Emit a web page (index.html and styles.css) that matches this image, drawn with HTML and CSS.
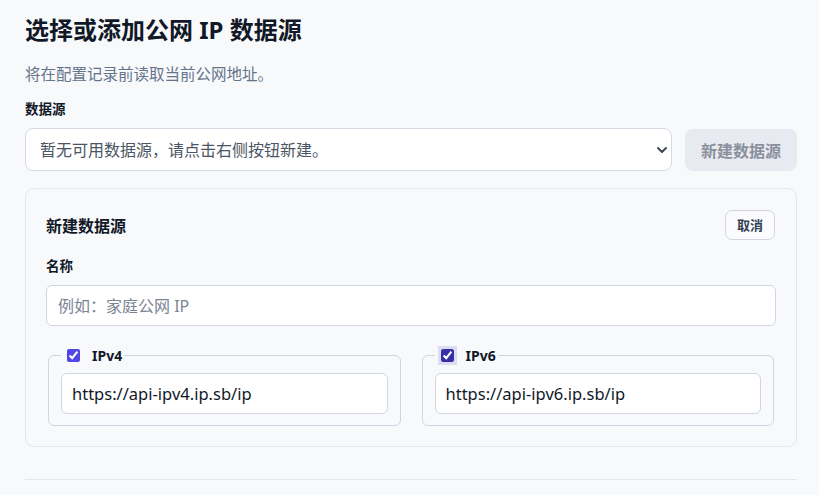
FILE: index.html
```html
<!DOCTYPE html>
<html lang="zh-CN">
<head>
  <meta charset="UTF-8">
  <title>选择或添加公网 IP 数据源</title>
  <link rel="stylesheet" href="styles.css">
</head>
<body>
  <main class="panel">
    <h1>选择或添加公网 IP 数据源</h1>
    <p class="hint">将在配置记录前读取当前公网地址。</p>

    <label class="field-label" for="source">数据源</label>
    <div class="source-row">
      <div class="select-wrap">
        <select id="source" class="select">
          <option>暂无可用数据源，请点击右侧按钮新建。</option>
        </select>
        <svg class="chevron" width="10" height="6" viewBox="0 0 10 6">
          <path d="M1 1l4 4 4-4" fill="none" stroke="#374151" stroke-width="1.8" stroke-linecap="round" stroke-linejoin="round"/>
        </svg>
      </div>
      <button class="btn-new" disabled>新建数据源</button>
    </div>

    <section class="card">
      <div class="card-head">
        <h2>新建数据源</h2>
        <button class="btn-cancel">取消</button>
      </div>

      <label class="field-label" for="name">名称</label>
      <input id="name" class="input" type="text" placeholder="例如：家庭公网 IP">

      <div class="families">
        <fieldset class="family">
          <legend><label class="check"><input type="checkbox" checked> IPv4</label></legend>
          <input class="input url" type="text" value="https://api-ipv4.ip.sb/ip">
        </fieldset>
        <fieldset class="family">
          <legend><label class="check"><input type="checkbox" class="focused" checked> IPv6</label></legend>
          <input class="input url" type="text" value="https://api-ipv6.ip.sb/ip">
        </fieldset>
      </div>
    </section>

    <hr class="divider">
  </main>
</body>
</html>
```

FILE: styles.css
```css
body {
  margin: 0;
  background: #f8f9fb;
  color: #111827;
  font-family: "Noto Sans", "Noto Sans CJK SC", sans-serif;
}

.panel {
  width: 772px;
  padding: 13px 0 0 25px;
}

h1 {
  margin: 0;
  font-size: 24px;
  line-height: 34px;
  font-weight: 700;
  color: #111827;
}

.hint {
  margin: 16px 0 0;
  font-size: 15.5px;
  line-height: 22px;
  color: #64748b;
}

.field-label {
  display: block;
  margin: 15px 0 10px;
  font-size: 13.5px;
  line-height: 18px;
  font-weight: 700;
  color: #111827;
}

.source-row {
  display: flex;
  gap: 13px;
}

.select-wrap {
  position: relative;
  flex: 1;
}

.select {
  appearance: none;
  width: 100%;
  height: 43px;
  padding: 0 30px 0 14px;
  border: 1px solid #d5dae4;
  border-radius: 8px;
  background: #fff;
  font-family: inherit;
  font-size: 16px;
  color: #4b5563;
}

.chevron {
  position: absolute;
  right: 5px;
  top: 19px;
}

.btn-new {
  width: 112px;
  height: 42px;
  margin-top: 1px;
  border: none;
  border-radius: 8px;
  background: #e8eaf1;
  color: #8b909c;
  font-family: inherit;
  font-size: 16px;
  font-weight: 700;
}

.card {
  margin-top: 17px;
  padding: 20px;
  border: 1px solid #e2e6ee;
  border-radius: 9px;
  background: #f8f9fb;
}

.card-head {
  display: flex;
  justify-content: space-between;
  align-items: center;
  height: 31px;
}

.card-head h2 {
  margin: 0;
  font-size: 16px;
  font-weight: 700;
}

.btn-cancel {
  height: 30px;
  padding: 0 11px;
  margin-right: 1px;
  border: 1px solid #cfd5e1;
  border-radius: 7px;
  background: #fbfbfd;
  color: #334155;
  font-family: inherit;
  font-size: 13px;
  font-weight: 700;
}

.card .field-label {
  margin: 17px 0 10px;
}

.input {
  box-sizing: border-box;
  width: 100%;
  height: 41px;
  padding: 0 11px;
  border: 1px solid #cfd5e1;
  border-radius: 6px;
  background: #fff;
  font-family: inherit;
  font-size: 16px;
  color: #111827;
}

.input.url {
  padding-left: 10px;
  font-size: 16.5px;
}

.input::placeholder {
  color: #7b8494;
}

.families {
  display: grid;
  grid-template-columns: 1fr 1fr;
  gap: 17px;
  margin-top: 20px;
}

.family {
  min-width: 0;
  margin: 0 2px;
  padding: 8px 12px 11px;
  border: 1px solid #cfd5e1;
  border-radius: 6px;
}

.family legend {
  padding: 0 2px;
}

.check {
  display: flex;
  align-items: center;
  gap: 9px;
  font-size: 14px;
  font-weight: 700;
  line-height: 19px;
}

.check input {
  margin: 0 3px 0 4px;
  width: 13px;
  height: 13px;
  accent-color: #4f46e5;
}

.check input.focused {
  accent-color: #3730a3;
  outline: 3px solid #dcdcf5;
  outline-offset: 0;
}

.divider {
  margin: 32px 0 0;
  border: none;
  border-top: 1px solid #e2e6ee;
}
```
